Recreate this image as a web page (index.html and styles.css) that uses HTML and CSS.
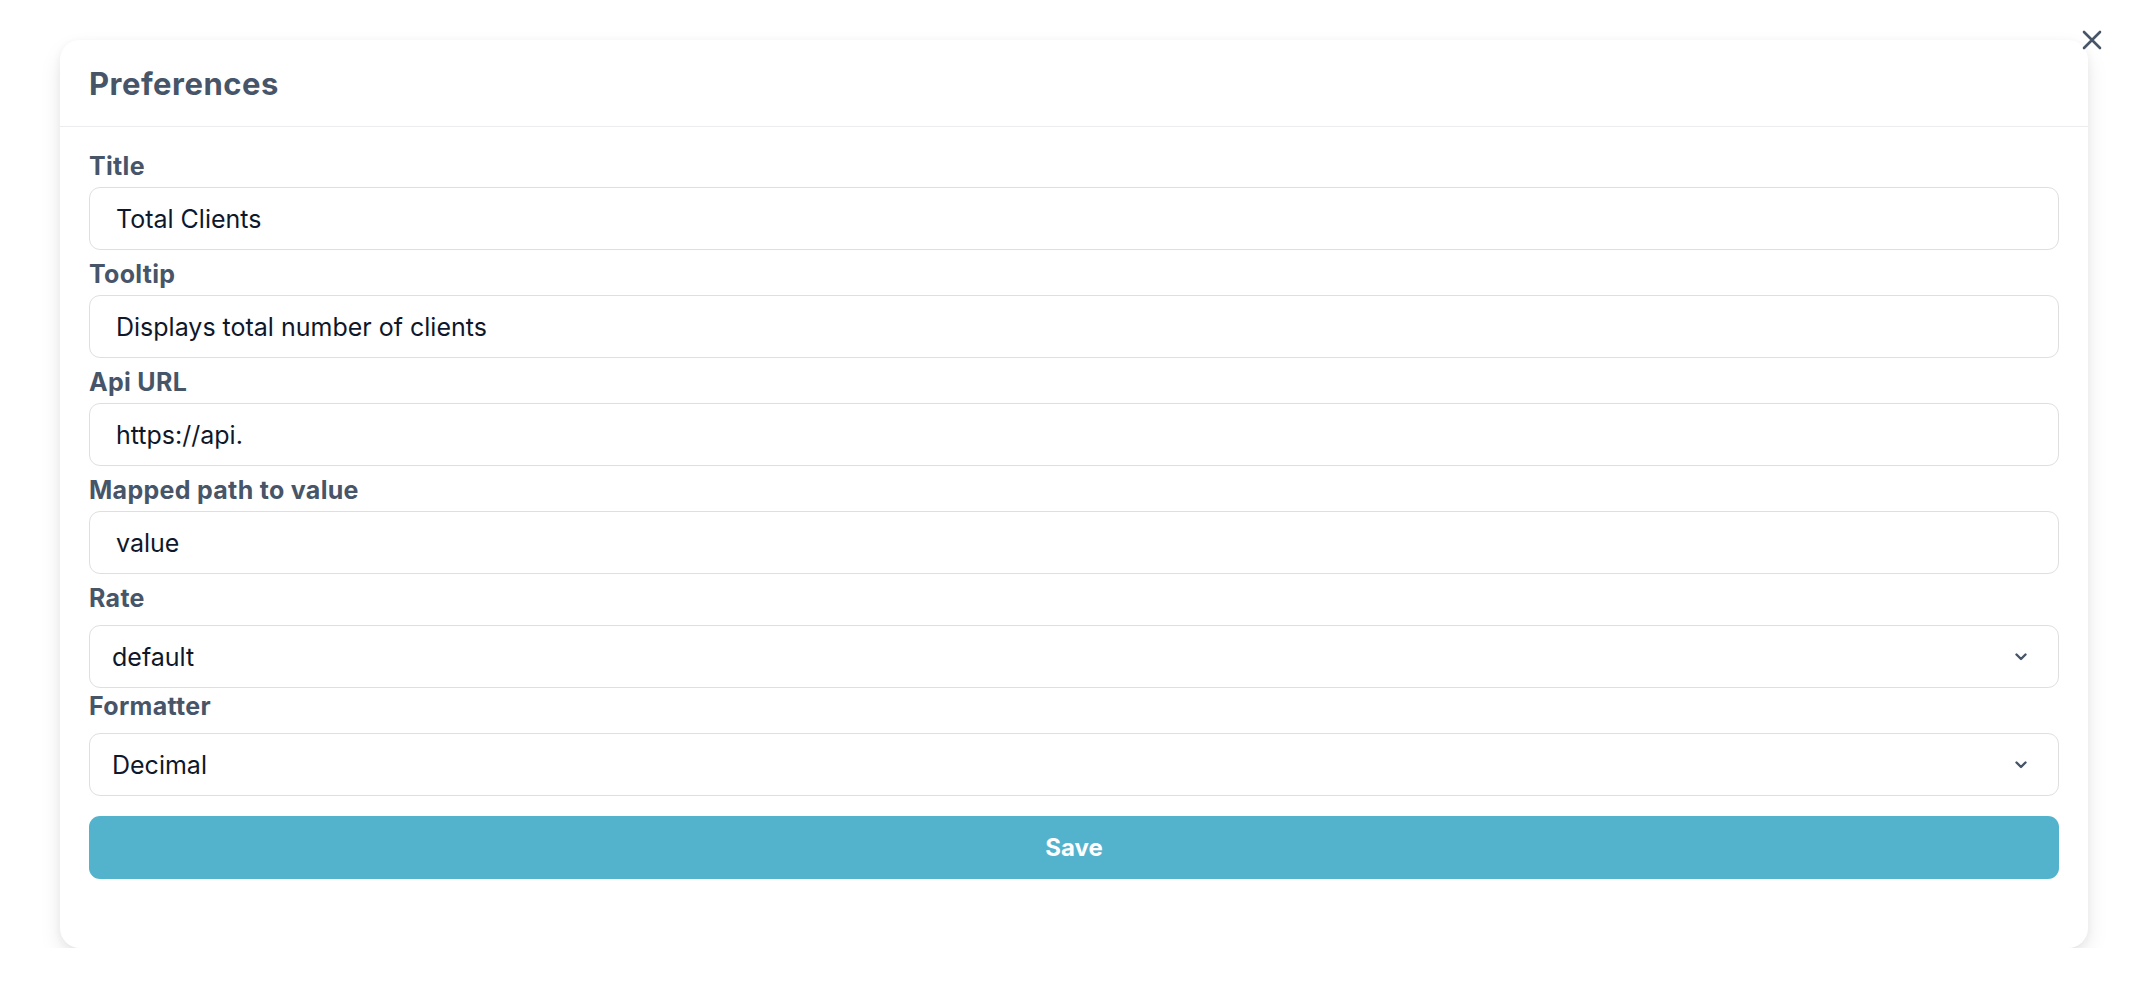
FILE: index.html
```html
<!DOCTYPE html>
<html lang="en">
<head>
    <meta charset="UTF-8">
    <meta name="viewport" content="width=device-width, initial-scale=1.0">
    <title>Preferences</title>
    <link rel="stylesheet" href="styles.css">
</head>
<body>
    <div class="modal">
        <button class="close-btn" type="button" aria-label="Close">
            <svg width="20" height="20" viewBox="0 0 20 20">
                <path d="M2 2 L18 18 M18 2 L2 18" stroke="#475569" stroke-width="2.6" stroke-linecap="round" fill="none"/>
            </svg>
        </button>
        <div class="modal-header">
            <h2>Preferences</h2>
        </div>
        <form class="modal-body" id="prefsForm">
            <div class="field">
                <label for="title">Title</label>
                <input type="text" id="title" value="Total Clients">
            </div>
            <div class="field">
                <label for="tooltip">Tooltip</label>
                <input type="text" id="tooltip" value="Displays total number of clients">
            </div>
            <div class="field">
                <label for="apiUrl">Api URL</label>
                <input type="text" id="apiUrl" value="https://api.">
            </div>
            <div class="field">
                <label for="path">Mapped path to value</label>
                <input type="text" id="path" value="value">
            </div>
            <div class="field select-field">
                <label for="rate">Rate</label>
                <div class="select-wrap">
                    <select id="rate">
                        <option>default</option>
                    </select>
                    <svg class="chevron" width="12" height="8" viewBox="0 0 12 8">
                        <path d="M1.5 1.5 L6 6 L10.5 1.5" stroke="#475569" stroke-width="2.4" stroke-linecap="round" stroke-linejoin="round" fill="none"/>
                    </svg>
                </div>
            </div>
            <div class="field select-field">
                <label for="formatter">Formatter</label>
                <div class="select-wrap">
                    <select id="formatter">
                        <option>Decimal</option>
                    </select>
                    <svg class="chevron" width="12" height="8" viewBox="0 0 12 8">
                        <path d="M1.5 1.5 L6 6 L10.5 1.5" stroke="#475569" stroke-width="2.4" stroke-linecap="round" stroke-linejoin="round" fill="none"/>
                    </svg>
                </div>
            </div>
            <button type="submit" class="save-btn">Save</button>
        </form>
    </div>
</body>
</html>
```

FILE: styles.css
```css
* {
    box-sizing: border-box;
}
body {
    margin: 0;
    padding: 40px 58px 0 60px;
    background: #fff;
    font-family: 'Inter', 'Liberation Sans', sans-serif;
}
.modal {
    position: relative;
    background: #fff;
    border-radius: 20px;
    box-shadow: 0 10px 24px -4px rgba(15, 23, 42, 0.13), 0 2px 8px rgba(15, 23, 42, 0.05);
}
.close-btn {
    position: absolute;
    top: -10px;
    right: -14px;
    width: 20px;
    height: 20px;
    padding: 0;
    border: none;
    background: none;
    cursor: pointer;
}
.close-btn svg {
    display: block;
}
.modal-header {
    height: 87px;
    padding: 0 29px;
    display: flex;
    align-items: center;
    border-bottom: 1px solid #ececee;
}
.modal-header h2 {
    margin: 0;
    font-size: 31px;
    font-weight: 700;
    letter-spacing: 0.5px;
    color: #475569;
}
.modal-body {
    padding: 25px 29px 69px;
    display: flex;
    flex-direction: column;
}
.field {
    display: flex;
    flex-direction: column;
    margin-bottom: 10px;
}
label {
    font-size: 25px;
    line-height: 29px;
    font-weight: 700;
    letter-spacing: 0.3px;
    color: #475569;
    margin-bottom: 6px;
}
input,
select {
    width: 100%;
    height: 63px;
    border: 1px solid #dfdfe2;
    border-radius: 11px;
    background: #fff;
    font-family: inherit;
    font-size: 25px;
    color: #0f172a;
    outline: none;
}
input {
    padding: 0 26px;
}
.select-field {
    margin-bottom: 4px;
}
.select-field label {
    margin-bottom: 12px;
}
.select-wrap {
    position: relative;
}
select {
    appearance: none;
    -webkit-appearance: none;
    padding: 0 60px 0 22px;
}
.chevron {
    position: absolute;
    right: 32px;
    top: 28px;
    pointer-events: none;
}
.save-btn {
    margin-top: 16px;
    height: 63px;
    border: none;
    border-radius: 11px;
    background: #53b3cd;
    color: #fff;
    font-family: inherit;
    font-size: 24px;
    font-weight: 700;
    cursor: pointer;
}
```
